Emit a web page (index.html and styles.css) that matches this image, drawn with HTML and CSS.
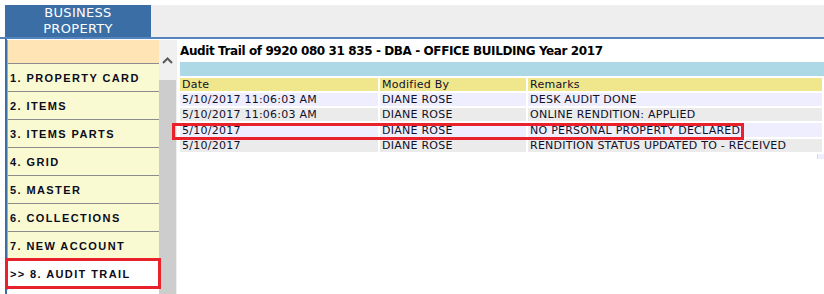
FILE: index.html
```html
<!DOCTYPE html>
<html lang="en">
<head>
	<meta charset="UTF-8">
	<title>Audit Trail</title>
	<link rel="stylesheet" href="styles.css">
</head>
<body>
	<div class="page">
		<div class="topbar">
			<div class="tab">BUSINESS<br>PROPERTY</div>
		</div>
		<div class="blueline"></div>
		<div class="main">
			<div class="side">
				<ul class="nav">
					<li class="blank"></li>
					<li>1. PROPERTY CARD</li>
					<li>2. ITEMS</li>
					<li>3. ITEMS PARTS</li>
					<li>4. GRID</li>
					<li>5. MASTER</li>
					<li>6. COLLECTIONS</li>
					<li>7. NEW ACCOUNT</li>
					<li class="current">&gt;&gt; 8. AUDIT TRAIL</li>
				</ul>
				<div class="mark mark-nav"></div>
			</div>
			<div class="scroll">
				<div class="track">
					<svg width="11" height="7" viewBox="0 0 11 7"><polyline points="1,6 5.5,1.5 10,6" fill="none" stroke="#5a5a5a" stroke-width="2"/></svg>
				</div>
				<div class="thumb"></div>
			</div>
			<div class="content">
				<h1 class="title">Audit Trail of 9920 080 31 835 - DBA - OFFICE BUILDING Year 2017</h1>
				<div class="caption"></div>
				<table class="grid">
					<tr class="head">
						<td class="c1">Date</td>
						<td class="c2">Modified By</td>
						<td>Remarks</td>
					</tr>
					<tr class="odd">
						<td>5/10/2017 11:06:03 AM</td>
						<td>DIANE ROSE</td>
						<td>DESK AUDIT DONE</td>
					</tr>
					<tr class="even">
						<td>5/10/2017 11:06:03 AM</td>
						<td>DIANE ROSE</td>
						<td>ONLINE RENDITION: APPLIED</td>
					</tr>
					<tr class="odd tall">
						<td>5/10/2017</td>
						<td>DIANE ROSE</td>
						<td>NO PERSONAL PROPERTY DECLARED</td>
					</tr>
					<tr class="even">
						<td>5/10/2017</td>
						<td>DIANE ROSE</td>
						<td>RENDITION STATUS UPDATED TO - RECEIVED</td>
					</tr>
				</table>
				<div class="pager"><span></span></div>
				<div class="mark mark-row"></div>
			</div>
		</div>
	</div>
</body>
</html>
```

FILE: styles.css
```css
*{
	margin: 0;
	padding: 0;
}
html, body{
	height: 100%;
	overflow: hidden;
	background: #fff;
}
.page{
	padding: 5px 0 0 5px;
	height: 100%;
	box-sizing: border-box;
	display: flex;
	flex-direction: column;
}
.topbar{
	height: 32px;
	background-color: #eeeeee;
	display: flex;
}
.tab{
	width: 146px;
	background-color: #3c6ea6;
	color: #fff;
	text-align: center;
	font: 13px/16px "DejaVu Sans", Verdana, sans-serif;
	letter-spacing: 0.3px;
}
.blueline{
	height: 2px;
	margin-left: -5px;
	background-color: #5483bd;
}
.main{
	flex: 1;
	display: flex;
	padding-top: 1px;
}
.side{
	position: relative;
	width: 152px;
	border-left: 2px solid #3c6ea6;
	margin-top: -1px;
	padding-top: 1px;
}
.nav{
	list-style: none;
	border-left: 1px solid #a8a8a8;
	font: bold 11px/28px "Liberation Sans", Arial, sans-serif;
	letter-spacing: 1.4px;
	color: #0c0c1c;
}
.nav li{
	height: 27px;
	padding-left: 2px;
	background-color: #fafad2;
	border-bottom: 1px solid #8c8c8c;
}
.nav li.blank{
	height: 23px;
	background-color: #ffe4b5;
}
.nav li.current{
	background-color: #fff;
	border-bottom: none;
	height: 30px;
}
.mark{
	position: absolute;
	border: 3px solid #e8212b;
}
.mark-nav{
	left: -2px;
	top: 219px;
	width: 150px;
	height: 25px;
}
.scroll{
	width: 17px;
	display: flex;
	flex-direction: column;
	border-right: 1px solid #eeeeee;
}
.track{
	height: 40px;
	background-color: #f0f0f0;
	display: flex;
	justify-content: center;
	padding-top: 17px;
	box-sizing: border-box;
}
.thumb{
	flex: 1;
	background-color: #cdcdcd;
}
.content{
	position: relative;
	flex: 1;
	padding-left: 1px;
	font: 11px/13px "DejaVu Sans", Verdana, sans-serif;
	letter-spacing: 0.25px;
	color: #10102a;
}
.title{
	font: bold 12px/22px "DejaVu Sans", Verdana, sans-serif;
	letter-spacing: -0.4px;
	padding: 0 0 0 2px;
	color: #000;
}
.caption{
	height: 14px;
	margin-left: 2px;
	background-color: #add8e6;
}
.grid{
	width: 100%;
	border-spacing: 2px;
}
.grid td{
	height: 13px;
	padding: 0 0 0 2px;
	white-space: nowrap;
}
.grid .tall td{
	height: 14px;
}
.grid .c1{
	width: 196px;
}
.grid .c2{
	width: 144px;
}
.head td{
	background-color: #f0e68c;
}
.odd td{
	background-color: #eeeeff;
}
.even td{
	background-color: #ebebeb;
}
.pager{
	text-align: right;
	height: 6px;
}
.pager span{
	display: inline-block;
	width: 6px;
	height: 5px;
	background-color: #eeeeff;
	border-left: 1px solid #f3d7b0;
	vertical-align: top;
}
.mark-row{
	left: -5px;
	top: 83px;
	width: 566px;
	height: 11px;
}
```
